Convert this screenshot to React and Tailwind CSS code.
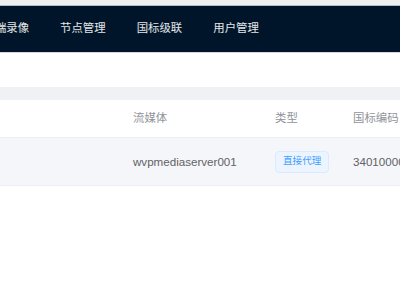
import React from "react";

const navItems = ["云端录像", "节点管理", "国标级联", "用户管理"];

const App = () => {
  return (
    <div
      className="w-[400px] h-[300px] overflow-hidden bg-white text-[11.4px]"
      style={{ fontFamily: '"Liberation Sans", "Noto Sans CJK SC", sans-serif' }}
    >
      <div className="h-[5px] bg-[#f0f0f0] border-b border-[#b8bcc2] box-content" />
      <nav className="h-[47px] bg-[#001529] border-b border-[#d5d9df] flex items-center overflow-hidden">
        <div className="flex shrink-0 -ml-[32px]">
          {navItems.map((item) => (
            <div key={item} className="shrink-0 px-[15.5px] text-white/90 whitespace-nowrap">
              {item}
            </div>
          ))}
        </div>
      </nav>
      <div className="h-[34px]" />
      <div className="h-[13px] bg-[#f0f1f4]" />
      <div className="flex h-[38px] items-center text-[#909399] border-b border-[#ebeef5] whitespace-nowrap">
        <div className="w-[133px] shrink-0" />
        <div className="w-[142px] shrink-0">流媒体</div>
        <div className="w-[78px] shrink-0">类型</div>
        <div className="shrink-0">国标编码</div>
      </div>
      <div className="flex h-[48px] items-center bg-[#f5f6f9] text-[#606266] border-b border-[#ebeef5] whitespace-nowrap">
        <div className="w-[133px] shrink-0" />
        <div className="w-[142px] shrink-0 text-[11.6px]">wvpmediaserver001</div>
        <div className="w-[78px] shrink-0">
          <span className="inline-flex items-center h-[22px] px-[7px] rounded-[4px] bg-[#ecf5ff] border border-[#d9ecff] text-[#409eff] text-[9.6px]">
            直接代理
          </span>
        </div>
        <div className="shrink-0 text-[11.6px]">34010000001110000001</div>
      </div>
    </div>
  );
};

export default App;
